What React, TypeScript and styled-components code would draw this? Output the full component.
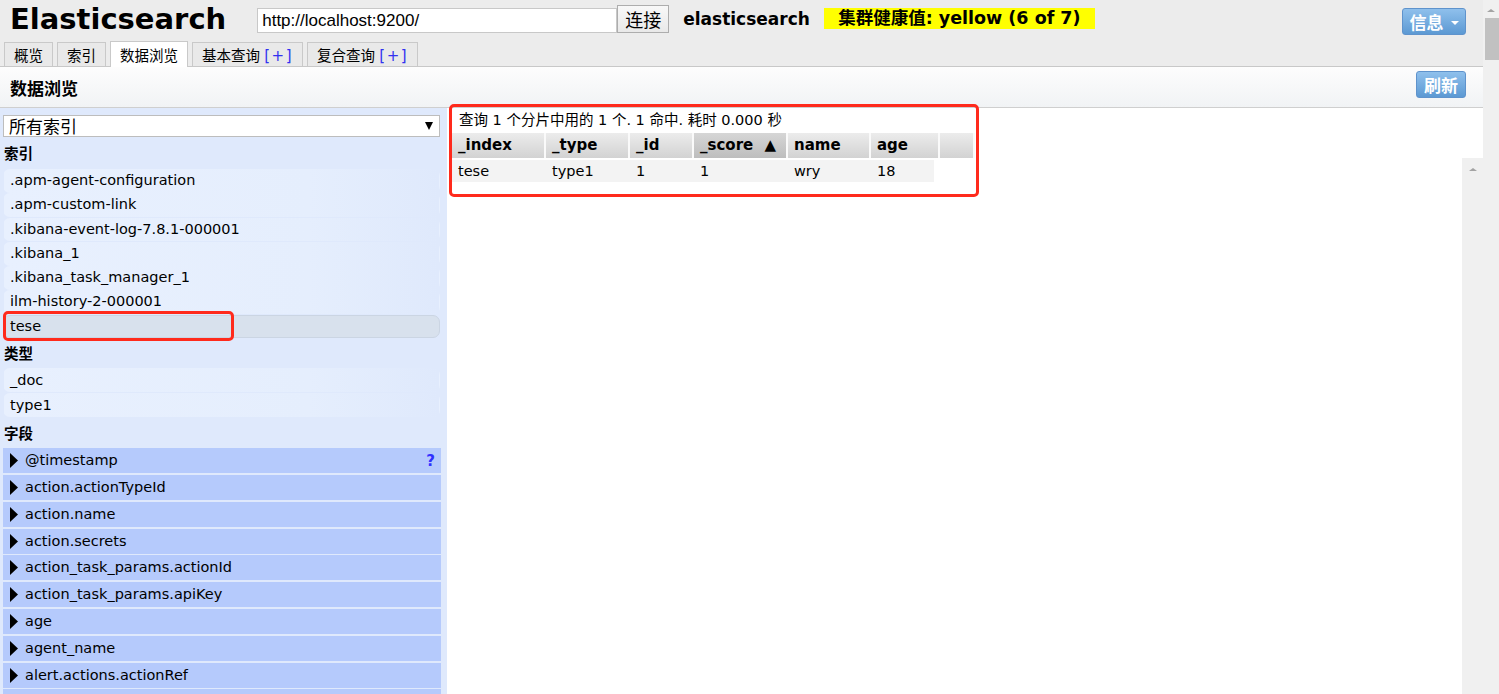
import React from 'react';
import styled, { createGlobalStyle } from 'styled-components';

const FONT = `"DejaVu Sans", "Noto Sans CJK SC", sans-serif`;
const CJK = `"Noto Sans CJK SC", "DejaVu Sans", sans-serif`;

const GlobalStyle = createGlobalStyle`
  html, body { margin: 0; padding: 0; overflow: hidden; background: #fff; }
  body { font-family: ${FONT}; color: #000; }
  * { box-sizing: border-box; }
`;

const Page = styled.div`
  display: flex;
  width: 1499px;
  height: 694px;
  overflow: hidden;
`;

const Main = styled.div`
  position: relative;
  flex: 1;
  min-width: 0;
  display: flex;
  flex-direction: column;
`;

/* ---------- top bar ---------- */
const TopBar = styled.div`
  height: 41px;
  flex: none;
  display: flex;
  align-items: flex-start;
  background: #ececec;
`;

const Title = styled.h1`
  margin: 2px 0 0 10px;
  font: bold 29px/34px ${FONT};
  color: #000;
`;

const UrlInput = styled.input`
  margin: 8px 0 0 31px;
  width: 360px;
  height: 25px;
  border: 1px solid #c8c8c8;
  padding: 0 0 0 4px;
  font: 17px "Liberation Sans", Arial, sans-serif;
  color: #000;
  background: #fff;
  outline: none;
`;

const ConnectButton = styled.button`
  margin-top: 5px;
  width: 52px;
  height: 28px;
  border: 1px solid #adadad;
  background: linear-gradient(#f8f8f8, #e9e9e9);
  font: 18px/26px ${CJK};
  padding: 0;
  color: #000;
`;

const ClusterName = styled.span`
  margin: 9px 0 0 14px;
  font: bold 17px/20px ${FONT};
`;

const HealthBadge = styled.span`
  margin: 8px 0 0 14px;
  width: 271px;
  height: 21px;
  background: #ffff00;
  font: bold 17.5px/21px ${FONT};
  text-align: center;
  white-space: nowrap;
`;

const Spacer = styled.div`
  flex: 1;
`;

const BlueButton = styled.button<{ $w: number; $top: number }>`
  flex: none;
  margin: ${(p) => p.$top}px 17px 0 0;
  width: ${(p) => p.$w}px;
  height: 27px;
  border: 1px solid #5f93cc;
  border-radius: 3px;
  background: linear-gradient(#8fc0ec, #5c99d3);
  color: #fff;
  font: bold 17px/25px ${CJK};
  padding: 0;
  display: flex;
  align-items: center;
  justify-content: center;
  gap: 7px;
`;

const Caret = styled.span`
  width: 0;
  height: 0;
  border-left: 4px solid transparent;
  border-right: 4px solid transparent;
  border-top: 4px solid #fff;
  margin-top: 2px;
`;

/* ---------- tabs ---------- */
const TabRow = styled.div`
  height: 26px;
  flex: none;
  display: flex;
  align-items: flex-end;
  gap: 4px;
  padding-left: 4px;
  background: #ececec;
  border-bottom: 1px solid #c8c8c8;
`;

const Tab = styled.div<{ $active?: boolean }>`
  height: ${(p) => (p.$active ? 26 : 24)}px;
  margin-bottom: ${(p) => (p.$active ? -1 : 0)}px;
  padding: 0 9px;
  border: 1px solid #c9c9c9;
  border-bottom: none;
  background: ${(p) => (p.$active ? '#fff' : '#e9e9e9')};
  font: 14.5px/${(p) => (p.$active ? 26 : 23)}px ${CJK};
  color: #000;
  white-space: nowrap;
`;

const Plus = styled.span`
  font: 15px ${FONT};
  letter-spacing: 1.5px;
  margin-left: 1px;
  color: #3232f0;
`;

/* ---------- section header ---------- */
const SectionHeader = styled.div`
  height: 41px;
  flex: none;
  display: flex;
  align-items: flex-start;
  background: linear-gradient(#fdfdfd, #f1f3f5);
  border-bottom: 1px solid #cfcfcf;
`;

const SectionTitle = styled.h2`
  margin: 9px 0 0 10px;
  font: bold 17px/24px ${CJK};
`;

/* ---------- body ---------- */
const Body = styled.div`
  flex: 1;
  min-height: 0;
  display: flex;
`;

const Sidebar = styled.div`
  width: 447px;
  flex: none;
  padding: 7px 7px 0 3px;
  background: #dfe9fc;
  display: flex;
  flex-direction: column;
`;

const Select = styled.div`
  height: 22px;
  flex: none;
  border: 1px solid #bdbdbd;
  background: #fff;
  display: flex;
  align-items: center;
  justify-content: space-between;
  padding: 0 6px 0 5px;
  font: 17px/20px ${CJK};
`;

const SelectArrow = styled.span`
  width: 0;
  height: 0;
  border-left: 4px solid transparent;
  border-right: 4px solid transparent;
  border-top: 8px solid #000;
`;

const GroupHeading = styled.div<{ $h: number }>`
  height: ${(p) => p.$h}px;
  flex: none;
  padding-left: 1px;
  font: bold 14.5px/${(p) => p.$h}px ${CJK};
`;

const ListRow = styled.div<{ $selected?: boolean; $h: number }>`
  height: ${(p) => p.$h}px;
  flex: none;
  margin-bottom: 0.5px;
  padding-left: 6px;
  border-radius: 7px;
  border: 1px solid ${(p) => (p.$selected ? '#cbd5e3' : 'transparent')};
  background: ${(p) =>
    p.$selected ? '#d8e1ed' : 'linear-gradient(to right, #e8f0fe 0%, #e5eefd 70%, #dfe9fc 100%)'};
  font: 14.5px/${(p) => p.$h - 2}px ${FONT};
  white-space: nowrap;
`;

const FieldRow = styled.div`
  height: 25px;
  flex: none;
  margin-bottom: 1.8px;
  width: 438px;
  display: flex;
  align-items: center;
  gap: 7px;
  padding: 0 6px 0 7px;
  background: #b5cafc;
  font: 14.5px/25px ${FONT};
  white-space: nowrap;
`;

const FieldName = styled.span`
  flex: 1;
`;

const Help = styled.span`
  color: #3030ff;
  font: bold 15px ${FONT};
`;

const Triangle = () => (
  <svg width="8" height="15" viewBox="0 0 8 15" aria-hidden>
    <polygon points="0,0 8,7.5 0,15" fill="#000" />
  </svg>
);

/* ---------- results ---------- */
const Content = styled.div`
  flex: 1;
  min-width: 0;
  display: flex;
  flex-direction: column;
  background: #fff;
`;

const Summary = styled.div`
  height: 25px;
  flex: none;
  padding-left: 12px;
  font: 14.5px/25px ${FONT};
  white-space: nowrap;
`;

const HeaderRow = styled.div`
  height: 25px;
  flex: none;
  margin-left: 5px;
  display: flex;
`;

const HeadCell = styled.div<{ $w: number; $sorted?: boolean }>`
  width: ${(p) => p.$w}px;
  flex: none;
  padding: 0 10px 0 6px;
  border-right: 2px solid #fafafa;
  background: ${(p) =>
    p.$sorted ? 'linear-gradient(#d6d6d6, #bdbdbd)' : 'linear-gradient(#ececec, #d2d2d2)'};
  font: bold 15px/25px ${FONT};
  display: flex;
  justify-content: space-between;
  white-space: nowrap;
`;

const ScrollRegion = styled.div`
  flex: 1;
  min-height: 0;
  display: flex;
`;

const DataPane = styled.div`
  flex: 1;
  padding: 2px 0 0 5px;
`;

const DataRow = styled.div`
  display: flex;
  height: 22px;
  width: 482px;
  background: #f3f3f3;
`;

const DataCell = styled.div<{ $w: number }>`
  width: ${(p) => p.$w}px;
  flex: none;
  padding-left: 6px;
  font: 14.5px/22px ${FONT};
  white-space: nowrap;
`;

const VScroll = styled.div`
  width: 21px;
  flex: none;
  background: #f0f0f0;
  display: flex;
  justify-content: center;
  padding-top: 10px;
`;

const UpArrow = styled.span<{ $size: number }>`
  width: 0;
  height: 0;
  border-left: ${(p) => p.$size}px solid transparent;
  border-right: ${(p) => p.$size}px solid transparent;
  border-bottom: ${(p) => p.$size - 1}px solid #a3a3a3;
`;

/* ---------- page scrollbar ---------- */
const PageScroll = styled.div`
  width: 16px;
  flex: none;
  background: #f0f0f0;
  display: flex;
  flex-direction: column;
  align-items: center;
  padding-top: 9px;
`;

const Thumb = styled.div`
  margin: 6px 0 0 2px;
  width: 14px;
  height: 42px;
  background: #c1c1c1;
`;

/* ---------- annotations ---------- */
const Mark = styled.div<{ $x: number; $y: number; $w: number; $h: number }>`
  position: absolute;
  left: ${(p) => p.$x}px;
  top: ${(p) => p.$y}px;
  width: ${(p) => p.$w}px;
  height: ${(p) => p.$h}px;
  border: 3px solid #ff2a1c;
  border-radius: 5px;
  pointer-events: none;
`;

const indices = [
  '.apm-agent-configuration',
  '.apm-custom-link',
  '.kibana-event-log-7.8.1-000001',
  '.kibana_1',
  '.kibana_task_manager_1',
  'ilm-history-2-000001',
];

const fields = [
  '@timestamp',
  'action.actionTypeId',
  'action.name',
  'action.secrets',
  'action_task_params.actionId',
  'action_task_params.apiKey',
  'age',
  'agent_name',
  'alert.actions.actionRef',
  'alert.actions.group',
];

const columns: { name: string; w: number; sorted?: boolean }[] = [
  { name: '_index', w: 94 },
  { name: '_type', w: 84 },
  { name: '_id', w: 64 },
  { name: '_score', w: 94, sorted: true },
  { name: 'name', w: 83 },
  { name: 'age', w: 69 },
  { name: '', w: 35 },
];

const rowValues = ['tese', 'type1', '1', '1', 'wry', '18'];
const dataWidths = [94, 84, 64, 94, 83, 63];

export default function App() {
  return (
    <>
      <GlobalStyle />
      <Page>
        <Main>
          <TopBar>
            <Title>Elasticsearch</Title>
            <UrlInput defaultValue="http://localhost:9200/" />
            <ConnectButton>连接</ConnectButton>
            <ClusterName>elasticsearch</ClusterName>
            <HealthBadge>集群健康值: yellow (6 of 7)</HealthBadge>
            <Spacer />
            <BlueButton $w={64} $top={8}>
              信息
              <Caret />
            </BlueButton>
          </TopBar>

          <TabRow>
            <Tab>概览</Tab>
            <Tab>索引</Tab>
            <Tab $active>数据浏览</Tab>
            <Tab>
              基本查询 <Plus>[+]</Plus>
            </Tab>
            <Tab>
              复合查询 <Plus>[+]</Plus>
            </Tab>
          </TabRow>

          <SectionHeader>
            <SectionTitle>数据浏览</SectionTitle>
            <Spacer />
            <BlueButton $w={50} $top={4}>
              刷新
            </BlueButton>
          </SectionHeader>

          <Body>
            <Sidebar>
              <Select>
                <span>所有索引</span>
                <SelectArrow />
              </Select>
              <GroupHeading $h={32}>索引</GroupHeading>
              {indices.map((name) => (
                <ListRow key={name} $h={23.8}>
                  {name}
                </ListRow>
              ))}
              <ListRow $h={23} $selected>
                tese
              </ListRow>
              <GroupHeading $h={30}>类型</GroupHeading>
              <ListRow $h={24}>_doc</ListRow>
              <ListRow $h={24}>type1</ListRow>
              <GroupHeading $h={31}>字段</GroupHeading>
              {fields.map((f, i) => (
                <FieldRow key={f}>
                  <Triangle />
                  <FieldName>{f}</FieldName>
                  {i === 0 && <Help>?</Help>}
                </FieldRow>
              ))}
            </Sidebar>

            <Content>
              <Summary>查询 1 个分片中用的 1 个. 1 命中. 耗时 0.000 秒</Summary>
              <HeaderRow>
                {columns.map((c, i) => (
                  <HeadCell key={i} $w={c.w} $sorted={c.sorted}>
                    <span>{c.name}</span>
                    {c.sorted && <span>▲</span>}
                  </HeadCell>
                ))}
              </HeaderRow>
              <ScrollRegion>
                <DataPane>
                  <DataRow>
                    {rowValues.map((v, i) => (
                      <DataCell key={i} $w={dataWidths[i]}>
                        {v}
                      </DataCell>
                    ))}
                  </DataRow>
                </DataPane>
                <VScroll>
                  <UpArrow $size={4} />
                </VScroll>
              </ScrollRegion>
            </Content>
          </Body>

          <Mark $x={449} $y={104} $w={530} $h={93} />
          <Mark $x={3} $y={311} $w={231} $h={30} />
        </Main>
        <PageScroll>
          <UpArrow $size={4} />
          <Thumb />
        </PageScroll>
      </Page>
    </>
  );
}
